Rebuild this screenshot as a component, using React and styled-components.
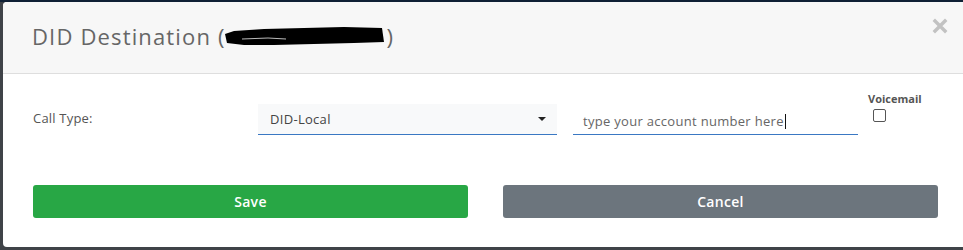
import React from "react";
import styled, { createGlobalStyle } from "styled-components";

const GlobalStyle = createGlobalStyle`
  html, body {
    margin: 0;
    padding: 0;
    height: 250px;
    overflow: hidden;
    background: linear-gradient(#0f2035 0 2px, #3f4348 2px);
    font-family: "Open Sans", "Liberation Sans", sans-serif;
  }
`;

const Modal = styled.div`
  margin: 2px 0 0 3px;
  width: 962px;
  height: 245px;
  background: #fff;
  border-radius: 4px 0 0 4px;
  overflow: hidden;
  display: flex;
  flex-direction: column;
`;

const Header = styled.div`
  height: 72px;
  background: #f7f7f7;
  border-bottom: 1px solid #dedede;
  display: flex;
  align-items: center;
  justify-content: space-between;
  padding: 0 17px 4px 29px;
  box-sizing: border-box;
  flex-shrink: 0;
`;

const Title = styled.h4`
  margin: 0;
  font-size: 22px;
  font-weight: 400;
  color: #666;
  display: flex;
  align-items: center;
  letter-spacing: 1.15px;
`;

const Close = styled.button`
  border: none;
  background: none;
  padding: 0;
  margin-top: -20px;
  cursor: pointer;
  display: flex;
`;

const Body = styled.div`
  padding: 14px 25px 0 30px;
  display: flex;
  flex-direction: column;
`;

const Row = styled.div`
  display: grid;
  grid-template-columns: 209px 299px 285px auto;
  column-gap: 16px;
  align-items: end;
  height: 48px;
`;

const Label = styled.label`
  font-size: 13px;
  color: #555;
  align-self: center;
  margin-top: 12px;
  letter-spacing: 0.2px;
`;

const Select = styled.div`
  height: 31px;
  background: #f8f9fa;
  border-bottom: 1px solid #3a78c3;
  display: flex;
  align-items: center;
  justify-content: space-between;
  padding: 0 11px 0 12px;
  box-sizing: border-box;
  font-size: 13px;
  color: #444;
  letter-spacing: 0.3px;
  margin-bottom: 1px;
`;

const Caret = styled.span`
  width: 0;
  height: 0;
  border-left: 4px solid transparent;
  border-right: 4px solid transparent;
  border-top: 4px solid #222;
`;

const Field = styled.div`
  height: 29px;
  border-bottom: 1px solid #3a78c3;
  display: flex;
  align-items: center;
  padding: 2px 10px 0;
  box-sizing: border-box;
  font-size: 13px;
  color: #666;
  letter-spacing: 0.3px;
  margin-bottom: 1px;
`;

const Cursor = styled.span`
  display: inline-block;
  width: 1px;
  height: 15px;
  background: #111;
  margin-left: 1px;
`;

const Check = styled.div`
  align-self: start;
  display: flex;
  flex-direction: column;
  align-items: flex-start;
  margin-left: -6px;
  margin-top: 3px;
`;

const CheckLabel = styled.span`
  font-size: 11px;
  font-weight: 700;
  color: #555;
`;

const Box = styled.span`
  width: 11px;
  height: 11px;
  border: 1px solid #555;
  border-radius: 2px;
  margin: 3px 0 0 5px;
`;

const Actions = styled.div`
  display: grid;
  grid-template-columns: 435px 435px;
  column-gap: 35px;
  margin-top: 49px;
`;

const Button = styled.button`
  height: 33px;
  border: none;
  border-radius: 3px;
  background: ${(p) => p.bg};
  color: #fff;
  font-family: "Open Sans", "Liberation Sans", sans-serif;
  font-size: 14px;
  font-weight: 600;
  letter-spacing: 0.3px;
  cursor: pointer;
`;

const Redacted = () => (
  <svg width="162" height="22" viewBox="0 0 162 22" style={{ margin: "0 1px 0 -2px" }}>
    <path d="M1 9 L10 6 L40 4 L80 3 L120 2 L158 3 L160 17 L130 18 L90 19 L50 20 L20 20 L3 18 Z" fill="#000" />
    <path d="M18 14 L44 13 L62 14" stroke="#bbb" strokeWidth="1" fill="none" />
  </svg>
);

export default function App() {
  return (
    <>
      <GlobalStyle />
      <Modal>
        <Header>
          <Title>
            DID Destination (<Redacted />)
          </Title>
          <Close aria-label="close">
            <svg width="16" height="16" viewBox="0 0 16 16">
              <path d="M3 3 L13 13 M13 3 L3 13" stroke="#c2c2c2" strokeWidth="3.4" strokeLinecap="square" />
            </svg>
          </Close>
        </Header>
        <Body>
          <Row>
            <Label>Call Type:</Label>
            <Select>
              DID-Local
              <Caret />
            </Select>
            <Field>
              type your account number here
              <Cursor />
            </Field>
            <Check>
              <CheckLabel>Voicemail</CheckLabel>
              <Box />
            </Check>
          </Row>
          <Actions>
            <Button bg="#28a745">Save</Button>
            <Button bg="#6c757d">Cancel</Button>
          </Actions>
        </Body>
      </Modal>
    </>
  );
}
